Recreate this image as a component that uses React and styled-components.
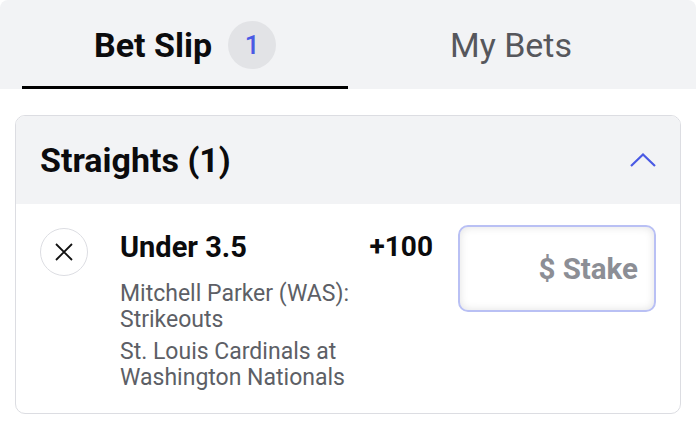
import React from 'react';
import styled, { createGlobalStyle } from 'styled-components';

const GlobalStyle = createGlobalStyle`
  body {
    margin: 0;
    background: #ffffff;
    font-family: Roboto, "Liberation Sans", sans-serif;
    color: #0b0b0d;
  }
`;

const Page = styled.div`
  width: 696px;
  height: 434px;
  overflow: hidden;
`;

const Tabs = styled.div`
  display: flex;
  height: 89px;
  padding: 0 22px;
  background: #f2f3f5;
  border-radius: 8px 8px 0 0;
`;

const Tab = styled.div`
  flex: 1;
  display: flex;
  align-items: center;
  justify-content: center;
  gap: 16px;
  font-size: 34px;
  font-weight: ${(p) => (p.$active ? 700 : 400)};
  color: ${(p) => (p.$active ? '#0b0b0d' : '#56575c')};
  border-bottom: 3px solid ${(p) => (p.$active ? '#000' : 'transparent')};
  padding-top: 3px;
`;

const Badge = styled.span`
  display: flex;
  align-items: center;
  justify-content: center;
  width: 48px;
  height: 48px;
  border-radius: 50%;
  background: #e2e3e6;
  color: #4a5ae4;
  font-size: 26px;
  font-weight: 500;
`;

const Card = styled.section`
  margin: 26px 15px 0;
  border: 1.5px solid #dcdde2;
  border-radius: 10px;
  overflow: hidden;
`;

const CardHeader = styled.div`
  display: flex;
  align-items: center;
  justify-content: space-between;
  height: 88px;
  padding: 0 24px;
  background: #f2f3f5;
`;

const CardTitle = styled.h2`
  margin: 0;
  font-size: 34px;
  font-weight: 700;
`;

const Leg = styled.div`
  display: flex;
  align-items: flex-start;
  padding: 21px 24px 22px;
`;

const CloseButton = styled.button`
  flex: none;
  display: flex;
  align-items: center;
  justify-content: center;
  width: 48px;
  height: 48px;
  margin-top: 3px;
  padding: 0;
  border: 1.5px solid #dcdde2;
  border-radius: 50%;
  background: #fff;
`;

const Info = styled.div`
  flex: 1;
  margin-left: 32px;
`;

const Selection = styled.div`
  font-size: 29px;
  font-weight: 700;
  line-height: 32px;
  margin-top: 6px;
  margin-bottom: 18px;
`;

const Detail = styled.div`
  font-size: 23px;
  line-height: 26px;
  color: #5d5f66;
  & + & {
    margin-top: 6px;
  }
`;

const Odds = styled.div`
  font-size: 28px;
  font-weight: 700;
  line-height: 32px;
  margin-top: 6px;
  margin-right: 25px;
`;

const Stake = styled.input`
  box-sizing: border-box;
  width: 198px;
  height: 87px;
  padding: 0 16px;
  border: 2px solid #b9c0f4;
  border-radius: 10px;
  background: #fff;
  box-shadow: inset 0 0 8px rgba(0, 0, 0, 0.12);
  font-family: Roboto, "Liberation Sans", sans-serif;
  font-size: 29.5px;
  font-weight: 700;
  text-align: right;
  outline: none;
  &::placeholder {
    color: #8c8e95;
  }
`;

const App = () => {
  return (
    <Page>
      <GlobalStyle />
      <Tabs>
        <Tab $active>
          Bet Slip <Badge>1</Badge>
        </Tab>
        <Tab>My Bets</Tab>
      </Tabs>
      <Card>
        <CardHeader>
          <CardTitle>Straights (1)</CardTitle>
          <svg width="26" height="14" viewBox="0 0 26 14" fill="none">
            <path d="M1 13 L13 1.5 L25 13" stroke="#4a5ae4" strokeWidth="2.2" />
          </svg>
        </CardHeader>
        <Leg>
          <CloseButton aria-label="Remove">
            <svg width="18" height="18" viewBox="0 0 18 18">
              <path d="M1 1 L17 17 M17 1 L1 17" stroke="#111" strokeWidth="1.8" />
            </svg>
          </CloseButton>
          <Info>
            <Selection>Under 3.5</Selection>
            <Detail>Mitchell Parker (WAS): Strikeouts</Detail>
            <Detail>St. Louis Cardinals at Washington Nationals</Detail>
          </Info>
          <Odds>+100</Odds>
          <Stake placeholder="$ Stake" />
        </Leg>
      </Card>
    </Page>
  );
};

export default App;
